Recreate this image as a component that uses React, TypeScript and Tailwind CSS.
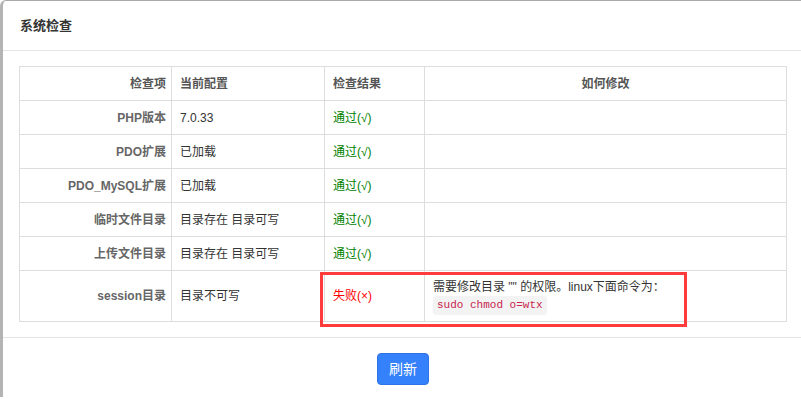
import React from "react";

const rows = [
  { k: "PHP版本", v: "7.0.33", ok: true },
  { k: "PDO扩展", v: "已加载", ok: true },
  { k: "PDO_MySQL扩展", v: "已加载", ok: true },
  { k: "临时文件目录", v: "目录存在 目录可写", ok: true },
  { k: "上传文件目录", v: "目录存在 目录可写", ok: true },
];

const font = { fontFamily: '"Liberation Sans", "Noto Sans CJK SC", sans-serif' };

export default function App() {
  return (
    <div className="w-[801px] h-[399px] overflow-hidden bg-white relative" style={font}>
      <div className="w-[803px] h-[397px] bg-white border-l-[3px] border-l-[#b4b4b4] border-t border-t-[#a9a9a9] rounded-tl-[6px] flex flex-col">
        <div className="h-[50px] shrink-0 border-b border-[#e5e5e5] flex items-center pl-[17px]">
          <span className="text-[13px] font-bold text-[#333] leading-none">系统检查</span>
        </div>
        <div className="h-[287px] shrink-0 pt-[15px] pl-[16px] border-b border-[#e5e5e5]">
          <table className="border-collapse text-[12px] leading-[16px] table-fixed w-[767px]">
            <colgroup>
              <col className="w-[152px]" />
              <col className="w-[153px]" />
              <col className="w-[100px]" />
              <col className="w-[362px]" />
            </colgroup>
            <thead>
              <tr className="h-[34px]">
                <th className="border border-[#ddd] text-right pr-[5px] font-bold text-[#555]">检查项</th>
                <th className="border border-[#ddd] text-left pl-[8px] font-bold text-[#555]">当前配置</th>
                <th className="border border-[#ddd] text-left pl-[8px] font-bold text-[#555]">检查结果</th>
                <th className="border border-[#ddd] text-center font-bold text-[#555]">如何修改</th>
              </tr>
            </thead>
            <tbody>
              {rows.map((r) => (
                <tr key={r.k} className="h-[34px]">
                  <td className="border border-[#ddd] text-right pr-[5px] font-bold text-[#666]">{r.k}</td>
                  <td className="border border-[#ddd] pl-[8px] text-[#333]">{r.v}</td>
                  <td className="border border-[#ddd] pl-[8px] text-[#008000]">通过(√)</td>
                  <td className="border border-[#ddd]"></td>
                </tr>
              ))}
              <tr className="h-[51px]">
                <td className="border border-[#ddd] text-right pr-[5px] font-bold text-[#666]">session目录</td>
                <td className="border border-[#ddd] pl-[8px] text-[#333]">目录不可写</td>
                <td className="border border-[#ddd] pl-[8px] text-[#ff0000]">失败(×)</td>
                <td className="border border-[#ddd] pl-[8px] text-[#333] pt-[2px]">
                  <div>需要修改目录 "" 的权限。linux下面命令为：</div>
                  <div className="mt-[1px]">
                    <code
                      className="inline-block bg-[#f3f3f3] text-[#c7254e] rounded-[3px] px-[4px] py-[2px] text-[11px] leading-[15px]"
                      style={{ fontFamily: '"Liberation Mono", "DejaVu Sans Mono", monospace' }}
                    >
                      sudo chmod o=wtx
                    </code>
                  </div>
                </td>
              </tr>
            </tbody>
          </table>
        </div>
        <div className="flex-1 flex justify-center pt-[15px]">
          <button className="h-[32px] w-[52px] bg-[#3581fb] border border-[#2f74e6] rounded-[4px] text-white text-[14px]">
            刷新
          </button>
        </div>
      </div>
      <div className="absolute left-[320px] top-[272px] w-[367px] h-[55px] border-[3px] border-[#ff3b3b]"></div>
    </div>
  );
}
